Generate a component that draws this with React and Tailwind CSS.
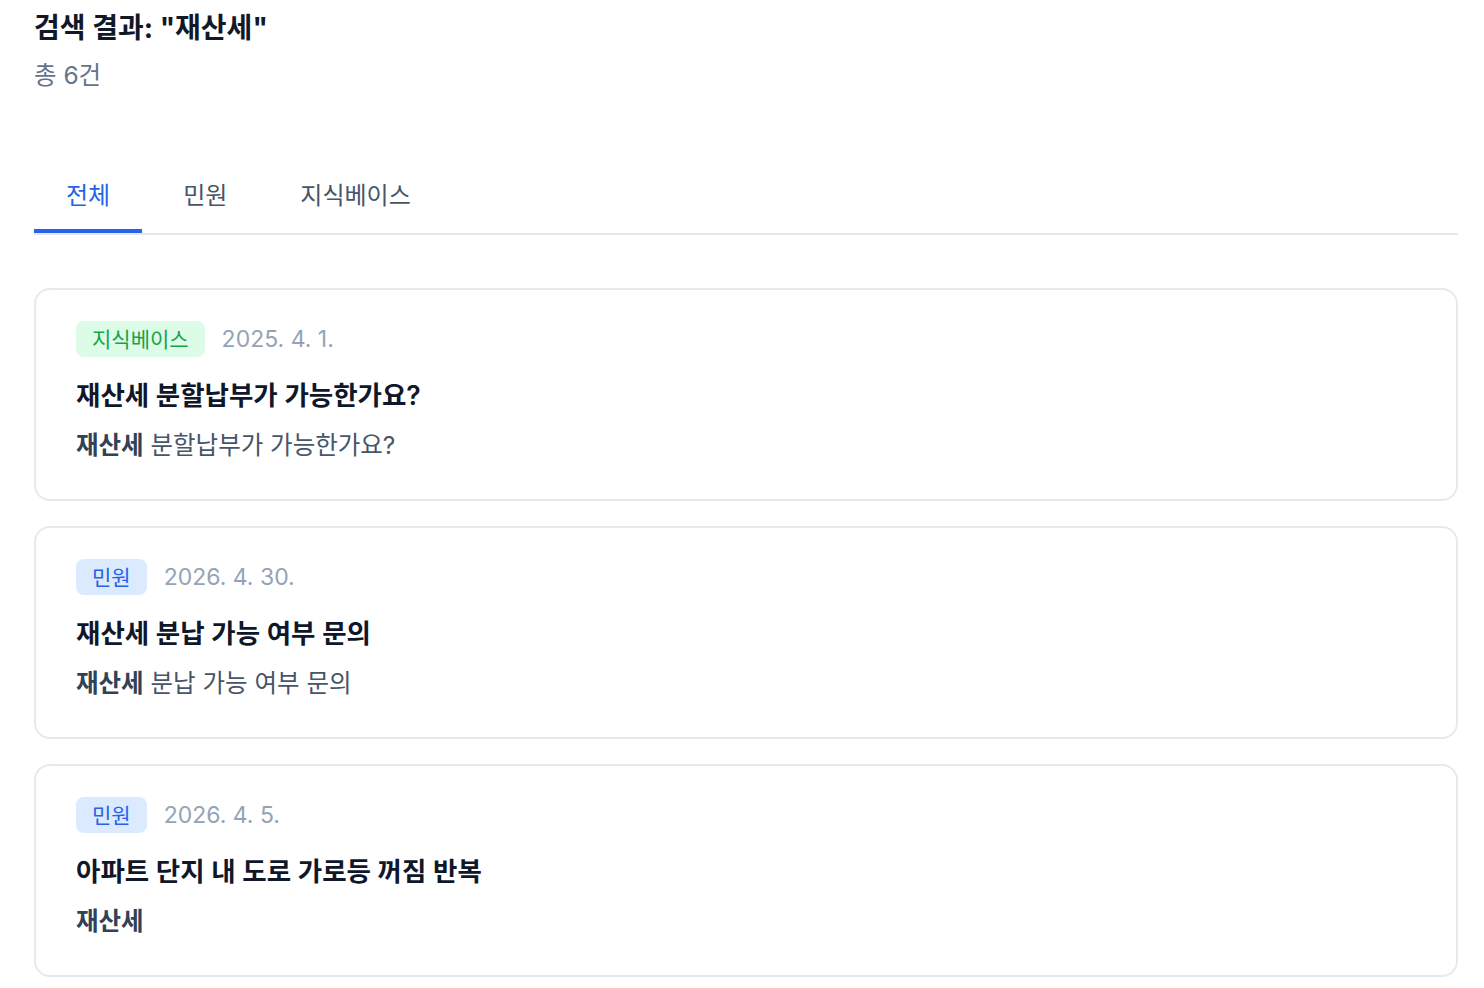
import React from "react";

const items = [
  { type: "kb", date: "2025. 4. 1.", title: "재산세 분할납부가 가능한가요?", rest: " 분할납부가 가능한가요?" },
  { type: "mw", date: "2026. 4. 30.", title: "재산세 분납 가능 여부 문의", rest: " 분납 가능 여부 문의" },
  { type: "mw", date: "2026. 4. 5.", title: "아파트 단지 내 도로 가로등 꺼짐 반복", rest: "" },
];

function Badge({ type }) {
  if (type === "kb") {
    return (
      <span className="h-[36px] px-[16px] flex items-center rounded-[8px] bg-[#dcfce7] text-[#16a34a] text-[21px] leading-none">
        지식베이스
      </span>
    );
  }
  return (
    <span className="h-[36px] px-[16px] flex items-center rounded-[8px] bg-[#dbeafe] text-[#2563eb] text-[21px] leading-none">
      민원
    </span>
  );
}

export default function App() {
  return (
    <div
      className="min-h-screen bg-white pl-[34px] pr-[26px] pt-[10px]"
      style={{ fontFamily: 'Inter, "Noto Sans CJK KR", sans-serif' }}
    >
      <h1 className="text-[28px] leading-[36px] font-bold text-[#111827]">검색 결과: "재산세"</h1>
      <p className="mt-[13px] text-[24.5px] leading-[32px] text-[#64748b]">총 6건</p>

      <div className="mt-[73px] flex gap-[9px] border-b-2 border-[#e5e7eb]">
        <button className="px-[32px] pt-[16px] pb-[17px] border-b-4 border-[#2563eb] text-[24px] leading-[32px] text-[#2563eb]">
          전체
        </button>
        <button className="px-[32px] pt-[16px] pb-[17px] border-b-4 border-transparent text-[24px] leading-[32px] text-[#475569]">
          민원
        </button>
        <button className="px-[32px] pt-[16px] pb-[17px] border-b-4 border-transparent text-[24px] leading-[32px] text-[#475569]">
          지식베이스
        </button>
      </div>

      <div className="mt-[53px] flex flex-col gap-[25px]">
        {items.map((it, i) => (
          <div key={i} className="border-2 border-[#e5e9f0] rounded-[16px] pl-[40px] pr-[40px] pt-[31px] pb-[38px]">
            <div className="flex items-center gap-[17px]">
              <Badge type={it.type} />
              <span className="text-[23px] leading-[36px] text-[#94a3b8]">{it.date}</span>
            </div>
            <div className="mt-[20px] text-[26.5px] leading-[36px] font-semibold text-[#0f172a]">{it.title}</div>
            <div className="mt-[16px] text-[24.5px] leading-[32px] text-[#475569]">
              <span className="font-bold text-[#334155]">재산세</span>
              {it.rest}
            </div>
          </div>
        ))}
      </div>
    </div>
  );
}
